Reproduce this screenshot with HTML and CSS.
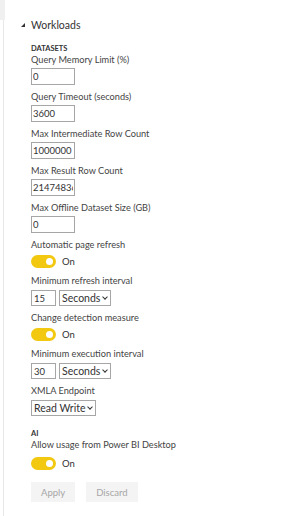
FILE: index.html
```html
<!DOCTYPE html>
<html lang="en">
<head>
    <meta charset="UTF-8">
    <meta name="viewport" content="width=device-width, initial-scale=1.0">
    <title>Workloads</title>
    <link rel="stylesheet" href="styles.css">
</head>
<body>
    <div class="page">
        <div class="rail">
            <div class="rail-top"></div>
        </div>

        <div class="panel">
            <div class="section-head">
                <span class="caret"></span>
                <span class="section-title">Workloads</span>
            </div>

            <div class="group-title">DATASETS</div>

            <div class="field">
                <label>Query Memory Limit (%)</label>
                <input class="text-box" type="text" value="0">
            </div>
            <div class="field">
                <label>Query Timeout (seconds)</label>
                <input class="text-box" type="text" value="3600">
            </div>
            <div class="field">
                <label>Max Intermediate Row Count</label>
                <input class="text-box" type="text" value="1000000">
            </div>
            <div class="field">
                <label>Max Result Row Count</label>
                <input class="text-box" type="text" value="2147483647">
            </div>
            <div class="field">
                <label>Max Offline Dataset Size (GB)</label>
                <input class="text-box" type="text" value="0">
            </div>

            <div class="field">
                <label>Automatic page refresh</label>
                <div class="toggle-row">
                    <span class="toggle"><span class="knob"></span></span>
                    <span class="toggle-text">On</span>
                </div>
            </div>
            <div class="field">
                <label>Minimum refresh interval</label>
                <div class="combo">
                    <input class="text-box short" type="text" value="15">
                    <div class="dropdown">Seconds <span class="chev"></span></div>
                </div>
            </div>
            <div class="field">
                <label>Change detection measure</label>
                <div class="toggle-row">
                    <span class="toggle"><span class="knob"></span></span>
                    <span class="toggle-text">On</span>
                </div>
            </div>
            <div class="field">
                <label>Minimum execution interval</label>
                <div class="combo">
                    <input class="text-box short" type="text" value="30">
                    <div class="dropdown">Seconds <span class="chev"></span></div>
                </div>
            </div>
            <div class="field">
                <label>XMLA Endpoint</label>
                <div class="combo">
                    <div class="dropdown">Read Write <span class="chev"></span></div>
                </div>
            </div>

            <div class="group-title ai">AI</div>
            <div class="field">
                <label>Allow usage from Power BI Desktop</label>
                <div class="toggle-row last">
                    <span class="toggle"><span class="knob"></span></span>
                    <span class="toggle-text">On</span>
                </div>
            </div>

            <div class="actions">
                <button class="btn" disabled>Apply</button>
                <button class="btn" disabled>Discard</button>
            </div>
        </div>
    </div>
</body>
</html>
```

FILE: styles.css
```css
body {
    margin: 0;
    background-color: #fff;
    font-family: Lato, "Open Sans", sans-serif;
    font-size: 9.2px;
    color: #333;
}

.page {
    display: flex;
    min-height: 516px;
}

.rail {
    width: 3px;
    border-right: 1px solid #e8e8e8;
}

.rail-top {
    width: 5px;
    height: 20px;
    background-color: #f0f0f0;
}

.panel {
    padding: 16px 0 0 27px;
}

.section-head {
    display: flex;
    align-items: center;
    margin-left: -10px;
    height: 17px;
}

.caret {
    width: 0;
    height: 0;
    border-left: 4px solid transparent;
    border-bottom: 4px solid #333;
    margin-right: 6px;
}

.section-title {
    font-size: 10.5px;
    color: #333;
}

.group-title {
    margin-top: 11px;
    font-size: 7.5px;
    font-weight: bold;
    color: #333;
    line-height: 10px;
}

.group-title.ai {
    margin-top: 13px;
}

.field label {
    display: block;
    line-height: 12px;
    color: #444;
}

.text-box {
    display: block;
    box-sizing: border-box;
    width: 44px;
    height: 17px;
    margin: 2px 0 6px;
    padding: 0 1px;
    border: 1px solid #a6a6a6;
    font-family: inherit;
    font-size: 9.5px;
    color: #333;
    outline: none;
}

.text-box.short {
    width: 25px;
    height: 16px;
    margin: 0;
    padding: 0 2px;
}

.combo {
    display: flex;
    gap: 3px;
    margin: 3px 0 6px;
}

.dropdown {
    box-sizing: border-box;
    height: 16px;
    padding: 0 3px 0 2px;
    border: 1px solid #a6a6a6;
    font-size: 10.5px;
    line-height: 14px;
    color: #333;
    display: flex;
    align-items: center;
    gap: 3px;
}

.chev {
    width: 3px;
    height: 3px;
    border-right: 1.5px solid #333;
    border-bottom: 1.5px solid #333;
    transform: rotate(45deg);
    margin-top: -2px;
}

.toggle-row {
    display: flex;
    align-items: center;
    gap: 6px;
    margin: 4px 0 7px;
}

.toggle-row.last {
    margin: 6px 0 0;
}

.toggle {
    width: 25px;
    height: 13px;
    border-radius: 7px;
    background-color: #f2c811;
    position: relative;
}

.knob {
    position: absolute;
    right: 3px;
    top: 3px;
    width: 7px;
    height: 7px;
    border-radius: 50%;
    background-color: #fff;
}

.toggle-text {
    font-size: 9.5px;
    color: #333;
}

.actions {
    display: flex;
    gap: 11px;
    margin-top: 12px;
}

.btn {
    height: 20px;
    padding: 0 10px;
    border: none;
    background-color: #f4f4f4;
    color: #a6a6a6;
    font-family: inherit;
    font-size: 9.5px;
}
```
